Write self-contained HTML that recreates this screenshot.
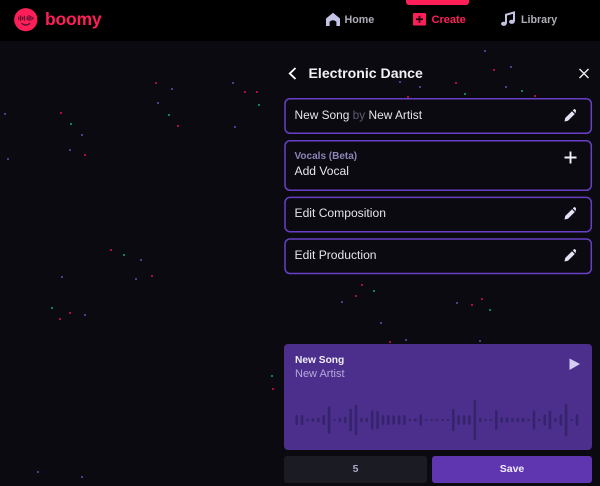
<!DOCTYPE html>
<html><head><meta charset="utf-8"><style>
html,body{margin:0;padding:0;background:#0a0a10}
body{width:600px;height:486px;position:relative;overflow:hidden;font-family:"Liberation Sans",sans-serif}
.t{position:absolute;white-space:nowrap;line-height:16px}
svg{position:absolute;left:0;top:0}
</style></head><body>
<div style="position:absolute;left:0;top:0;width:600px;height:41px;background:#000"></div>
<div style="position:absolute;left:406px;top:0;width:63px;height:4.5px;background:#ff1f58;border-radius:0 0 3px 3px"></div>

<svg width="600" height="486" viewBox="0 0 600 486" id="dots">
<g fill="#a8103f">
<rect x="155" y="82" width="2" height="2"/><rect x="244" y="91" width="2" height="2"/><rect x="256" y="91" width="2" height="2"/><rect x="60" y="112" width="2" height="2"/><rect x="177" y="125" width="2" height="2"/><rect x="84" y="154" width="2" height="2"/><rect x="110" y="249" width="2" height="2"/><rect x="151" y="275" width="2" height="2"/><rect x="69" y="312" width="2" height="2"/><rect x="59" y="318" width="2" height="2"/><rect x="272" y="388" width="2" height="2"/><rect x="361" y="284" width="2" height="2"/><rect x="355" y="295" width="2" height="2"/><rect x="471" y="304" width="2" height="2"/><rect x="481" y="298" width="2" height="2"/><rect x="389" y="341" width="2" height="2"/><rect x="493" y="69" width="2" height="2"/><rect x="455" y="82" width="2" height="2"/><rect x="407" y="96" width="2" height="2"/><rect x="534" y="95" width="2" height="2"/>
</g>
<g fill="#46408f">
<rect x="171" y="88" width="2" height="2"/><rect x="232" y="82" width="2" height="2"/><rect x="157" y="102" width="2" height="2"/><rect x="4" y="113" width="2" height="2"/><rect x="81" y="134" width="2" height="2"/><rect x="69" y="149" width="2" height="2"/><rect x="7" y="158" width="2" height="2"/><rect x="234" y="126" width="2" height="2"/><rect x="140" y="259" width="2" height="2"/><rect x="61" y="276" width="2" height="2"/><rect x="135" y="278" width="2" height="2"/><rect x="84" y="314" width="2" height="2"/><rect x="37" y="471" width="2" height="2"/><rect x="81" y="476" width="2" height="2"/><rect x="341" y="301" width="2" height="2"/><rect x="456" y="302" width="2" height="2"/><rect x="380" y="322" width="2" height="2"/><rect x="405" y="339" width="2" height="2"/><rect x="479" y="340" width="2" height="2"/><rect x="484" y="50" width="2" height="2"/><rect x="510" y="66" width="2" height="2"/><rect x="399" y="81" width="2" height="2"/><rect x="419" y="86" width="2" height="2"/><rect x="505" y="86" width="2" height="2"/>
</g>
<g fill="#0e7f6c">
<rect x="70" y="123" width="2" height="2"/><rect x="168" y="114" width="2" height="2"/><rect x="258" y="104" width="2" height="2"/><rect x="123" y="254" width="2" height="2"/><rect x="51" y="307" width="2" height="2"/><rect x="271" y="375" width="2" height="2"/><rect x="373" y="290" width="2" height="2"/><rect x="489" y="309" width="2" height="2"/><rect x="464" y="93" width="2" height="2"/><rect x="521" y="90" width="2" height="2"/>
</g>
</svg>

<!-- logo -->
<svg width="50" height="40" viewBox="0 0 50 40">
<circle cx="25.8" cy="19.7" r="11.6" fill="#ff1f58"/>
<g stroke="#5a1030" stroke-width="1.2" stroke-linecap="butt">
<path d="M18.700 16.500v3.500M20.600 15.500v5.500M22.500 16.800v3M24.400 15.800v5M27.200 16.500v3.500M29 15v6M30.900 16v4.500M32.800 17v2.600"/>
</g>
<path d="M21.800 23.400q4 3.400 8 0" fill="none" stroke="#5a1030" stroke-width="1.400" stroke-linecap="round"/>
</svg>
<div class="t" style="left:45px;top:9px;font-size:17.500px;line-height:20px;font-weight:bold;color:#ff1f58;letter-spacing:-.2px">boomy</div>

<!-- nav -->
<svg width="600" height="40" viewBox="0 0 600 40">
<path d="M326 26V18.500L333 12.800L340 18.500V26H336.400V21.800Q333 18.800 329.600 21.800V26Z" fill="#c3c3e6"/>
<rect x="413" y="13" width="13" height="12.500" rx="1.300" fill="#ff1f58"/>
<path d="M416 19.250h7M419.500 15.800v7" stroke="#1a0008" stroke-width="1.800" fill="none"/>
<path d="M506 23.500V14.800L514 12.500V21.500" fill="none" stroke="#c3c3e6" stroke-width="2"/>
<ellipse cx="503.800" cy="23.800" rx="2.800" ry="2.100" fill="#c3c3e6"/>
<ellipse cx="511.800" cy="21.800" rx="2.800" ry="2.100" fill="#c3c3e6"/>
</svg>
<div class="t" style="left:344.500px;top:11.500px;font-size:10.700px;font-weight:bold;color:#aeaeb8">Home</div>
<div class="t" style="left:431.500px;top:11.500px;font-size:11px;font-weight:bold;color:#ff1f58">Create</div>
<div class="t" style="left:521px;top:11.500px;font-size:10.700px;font-weight:bold;color:#aeaeb8">Library</div>

<!-- title -->
<svg width="600" height="90" viewBox="0 0 600 90">
<path d="M295.500 68L289.800 73.500L295.500 79" fill="none" stroke="#fff" stroke-width="1.900"/>
<path d="M579.500 69L588.500 78M588.500 69L579.500 78" fill="none" stroke="#eee" stroke-width="1.400"/>
</svg>
<div class="t" style="left:308.500px;top:65px;font-size:14.100px;font-weight:bold;color:#f2f2f5">Electronic Dance</div>

<!-- cards -->
<svg width="600" height="280" viewBox="0 0 600 280">
<g fill="#0a0a10" stroke="#693fc6" stroke-width="1.500">
<rect x="285" y="98.700" width="306.300" height="34.600" rx="5"/>
<rect x="285" y="140.700" width="306.300" height="49.600" rx="5"/>
<rect x="285" y="197.400" width="306.300" height="34.300" rx="5"/>
<rect x="285" y="239" width="306.300" height="34.500" rx="5"/>
</g>
</svg>
<div class="t" style="left:294.500px;top:107px;font-size:11.900px;color:#e6e6ea">New Song <span style="color:#5c5a70">by</span> New Artist</div>
<div class="t" style="left:294.500px;top:148.500px;font-size:10px;font-weight:bold;color:#8f84b8">Vocals (Beta)</div>
<div class="t" style="left:294.500px;top:163px;font-size:12.100px;color:#e6e6ea">Add Vocal</div>
<div class="t" style="left:294.500px;top:205px;font-size:12.100px;color:#e6e6ea">Edit Composition</div>
<div class="t" style="left:294.500px;top:247px;font-size:12.100px;color:#e6e6ea">Edit Production</div>
<svg width="600" height="280" viewBox="0 0 600 280">
<g fill="#e4e0f4">
<path d="M564.500 121.500L565.200 118L572 111.200L574.800 114L568 120.800ZM572.800 110.400L573.900 109.300Q574.500 108.800 575.100 109.300L575.900 110.100Q576.400 110.700 575.900 111.300L575.600 113.200Z"/>
<path transform="translate(0,98)" d="M564.500 121.500L565.200 118L572 111.200L574.800 114L568 120.800ZM572.800 110.400L573.900 109.300Q574.500 108.800 575.100 109.300L575.900 110.100Q576.400 110.700 575.900 111.300L575.600 113.200Z"/>
<path transform="translate(0,140)" d="M564.500 121.500L565.200 118L572 111.200L574.800 114L568 120.800ZM572.800 110.400L573.900 109.300Q574.500 108.800 575.100 109.300L575.900 110.100Q576.400 110.700 575.900 111.300L575.600 113.200Z"/>
</g>
<path d="M564.500 157.500h12M570.500 151.500v12" stroke="#f0eef8" stroke-width="1.900" fill="none"/>
</svg>

<!-- player -->
<div style="position:absolute;left:284px;top:344px;width:308px;height:106px;background:#4c2f8c;border-radius:4px"></div>
<div class="t" style="left:295px;top:353px;font-size:10.200px;font-weight:bold;color:#f0eef8">New Song</div>
<div class="t" style="left:295px;top:366px;font-size:11px;color:#b6a9dc">New Artist</div>
<svg width="600" height="486" viewBox="0 0 600 486">
<path d="M569.500 358.500L580 364L569.500 370Z" fill="#d6cef2"/>
<g fill="#35246c">
<rect x="295.400" y="415" width="2.600" height="10" rx="1.300"/><rect x="300.800" y="415" width="2.600" height="10" rx="1.300"/><rect x="306.200" y="418.700" width="2.600" height="2.600" rx="1.300"/><rect x="311.600" y="418.300" width="2.600" height="3.400" rx="1.300"/><rect x="317" y="417.700" width="2.600" height="4.600" rx="1.300"/><rect x="322.400" y="415" width="2.600" height="10" rx="1.300"/><rect x="327.800" y="406" width="2.600" height="28" rx="1.300"/><rect x="333.200" y="419" width="2.600" height="2" rx="1"/><rect x="338.500" y="417.700" width="2.600" height="4.600" rx="1.300"/><rect x="343.900" y="416.700" width="2.600" height="6.600" rx="1.300"/><rect x="349.300" y="408.700" width="2.600" height="22.600" rx="1.300"/><rect x="354.700" y="404.700" width="2.600" height="30.600" rx="1.300"/><rect x="360.100" y="417.700" width="2.600" height="4.600" rx="1.300"/><rect x="365.500" y="417.700" width="2.600" height="4.600" rx="1.300"/><rect x="370.900" y="410.300" width="2.600" height="19.400" rx="1.300"/><rect x="376.300" y="410.700" width="2.600" height="18.600" rx="1.300"/><rect x="381.700" y="415" width="2.600" height="10" rx="1.300"/><rect x="387" y="415" width="2.600" height="10" rx="1.300"/><rect x="392.400" y="415.300" width="2.600" height="9.400" rx="1.300"/><rect x="397.800" y="415.300" width="2.600" height="9.400" rx="1.300"/><rect x="403.200" y="415" width="2.600" height="10" rx="1.300"/><rect x="408.600" y="418.700" width="2.600" height="2.600" rx="1.300"/><rect x="414" y="418.300" width="2.600" height="3.400" rx="1.300"/><rect x="419.400" y="414.300" width="2.600" height="11.400" rx="1.300"/><rect x="424.800" y="419" width="2.600" height="2" rx="1"/><rect x="430.200" y="419" width="2.600" height="2" rx="1"/><rect x="435.500" y="419" width="2.600" height="2" rx="1"/><rect x="441.300" y="419" width="2.600" height="2" rx="1"/><rect x="446.700" y="419" width="2.600" height="2" rx="1"/><rect x="452" y="408.700" width="2.600" height="22.600" rx="1.300"/><rect x="457.400" y="415.300" width="2.600" height="9.400" rx="1.300"/><rect x="462.800" y="415.300" width="2.600" height="9.400" rx="1.300"/><rect x="468.100" y="415.300" width="2.600" height="9.400" rx="1.300"/><rect x="473.500" y="400" width="2.600" height="40" rx="1.300"/><rect x="478.900" y="417.700" width="2.600" height="4.600" rx="1.300"/><rect x="484.200" y="419" width="2.600" height="2" rx="1"/><rect x="489.600" y="419" width="2.600" height="2" rx="1"/><rect x="495" y="410" width="2.600" height="20" rx="1.300"/><rect x="500.400" y="417.300" width="2.600" height="5.400" rx="1.300"/><rect x="505.700" y="417.300" width="2.600" height="5.400" rx="1.300"/><rect x="511.100" y="418" width="2.600" height="4" rx="1.300"/><rect x="516.500" y="418" width="2.600" height="4" rx="1.300"/><rect x="521.800" y="417.700" width="2.600" height="4.600" rx="1.300"/><rect x="527.200" y="418.700" width="2.600" height="2.600" rx="1.300"/><rect x="532.700" y="410.300" width="2.600" height="19.400" rx="1.300"/><rect x="538" y="418.700" width="2.600" height="2.600" rx="1.300"/><rect x="543.400" y="414.300" width="2.600" height="11.400" rx="1.300"/><rect x="548.700" y="410.300" width="2.600" height="19.400" rx="1.300"/><rect x="554.100" y="418" width="2.600" height="4" rx="1.300"/><rect x="559.500" y="414.300" width="2.600" height="11.400" rx="1.300"/><rect x="564.800" y="403.700" width="2.600" height="32.600" rx="1.300"/><rect x="570.300" y="419" width="2.600" height="2" rx="1"/><rect x="575.700" y="414" width="2.600" height="12" rx="1.300"/>
</g>
</svg>

<!-- buttons -->
<div style="position:absolute;left:284px;top:456px;width:143px;height:27px;background:#1b1b24;border-radius:3px"></div>
<div style="position:absolute;left:432px;top:456px;width:160px;height:27px;background:#5f35b0;border-radius:3px"></div>
<div class="t" style="left:284px;width:143px;text-align:center;top:461px;font-size:10.500px;font-weight:bold;color:#a9a6c6">5</div>
<div class="t" style="left:432px;width:160px;text-align:center;top:461px;font-size:10.500px;font-weight:bold;color:#f2eefc">Save</div>
</body></html>
